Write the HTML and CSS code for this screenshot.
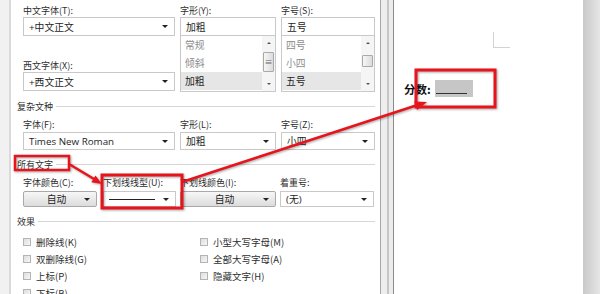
FILE: index.html
```html
<!DOCTYPE html>
<html>
<head>
    <title>字体</title>
    <link rel="stylesheet" href="styles.css">
</head>
<body>
    <div class="screen">
        <div class="edge"></div>

        <div class="dialog">
            <div class="font-grid">
                <div class="lbl">中文字体(T):</div>
                <div class="lbl">字形(Y):</div>
                <div class="lbl">字号(S):</div>

                <div class="combo"><span>+中文正文</span><i class="caret"></i></div>
                <div class="field">加粗</div>
                <div class="field">五号</div>

                <div class="stack">
                    <div class="lbl">西文字体(X):</div>
                    <div class="combo"><span>+西文正文</span><i class="caret"></i></div>
                </div>
                <div class="listbox">
                    <ul>
                        <li class="dim">常规</li>
                        <li class="dim">倾斜</li>
                        <li class="sel">加粗</li>
                    </ul>
                    <div class="scroll">
                        <i class="up"></i>
                        <div class="track"><b class="thumb long">≡</b></div>
                        <i class="down"></i>
                    </div>
                </div>
                <div class="listbox">
                    <ul>
                        <li class="dim">四号</li>
                        <li class="dim">小四</li>
                        <li class="sel">五号</li>
                    </ul>
                    <div class="scroll">
                        <i class="up"></i>
                        <div class="track"><b class="thumb short"></b></div>
                        <i class="down"></i>
                    </div>
                </div>
            </div>

            <div class="section">复杂文种</div>
            <div class="font-grid complex">
                <div class="lbl">字体(F):</div>
                <div class="lbl">字形(L):</div>
                <div class="lbl">字号(Z):</div>
                <div class="combo"><span>Times New Roman</span><i class="caret"></i></div>
                <div class="combo"><span>加粗</span><i class="caret"></i></div>
                <div class="combo"><span>小四</span><i class="caret"></i></div>
            </div>

            <div class="section">所有文字</div>
            <div class="all-grid">
                <div class="lbl">字体颜色(C):</div>
                <div class="lbl">下划线线型(U):</div>
                <div class="lbl">下划线颜色(I):</div>
                <div class="lbl">着重号:</div>
                <div class="btn small"><span>自动</span><i class="caret"></i></div>
                <div class="combo low"><span class="stroke"></span><i class="caret"></i></div>
                <div class="btn"><span>自动</span><i class="caret"></i></div>
                <div class="combo low"><span>(无)</span><i class="caret"></i></div>
            </div>

            <div class="section">效果</div>
            <div class="effects">
                <label><i class="box"></i>删除线(K)</label>
                <label><i class="box"></i>小型大写字母(M)</label>
                <label><i class="box"></i>双删除线(G)</label>
                <label><i class="box"></i>全部大写字母(A)</label>
                <label><i class="box"></i>上标(P)</label>
                <label><i class="box"></i>隐藏文字(H)</label>
                <label><i class="box"></i>下标(B)</label>
            </div>
        </div>

        <div class="divider"></div>

        <div class="page">
            <div class="corner"></div>
            <div class="score">分数: <span class="blank"><span></span></span></div>
        </div>

        <div class="shadow"></div>
    </div>

    <!-- red annotation marks on top of the screenshot -->
    <svg class="marks" width="600" height="294" viewBox="0 0 600 294">
        <g fill="none" stroke="#e8141c">
            <rect x="15" y="156" width="54" height="14" stroke-width="2.5"/>
            <rect x="102" y="175" width="80" height="33" stroke-width="3"/>
            <rect x="416" y="70" width="79" height="37" stroke-width="3"/>
            <line x1="69" y1="164" x2="94" y2="179" stroke-width="2.5"/>
            <line x1="182" y1="182" x2="416" y2="105.5" stroke-width="2.5"/>
        </g>
        <g fill="#e8141c">
            <polygon points="102,184 91.3,182.2 95.5,175.4"/>
            <polygon points="427,102 417,110 414.2,101.4"/>
        </g>
    </svg>
</body>
</html>
```

FILE: styles.css
```css
body {
    margin: 0;
    font-family: "Noto Sans CJK SC", "Noto Sans", sans-serif;
    font-size: 9px;
    color: #2e2e2e;
    position: relative;
}
.screen {
    display: flex;
    width: 600px;
    height: 294px;
    overflow: hidden;
}
.edge {
    width: 9px;
    background-color: #f1f1f1;
    border-right: 2px solid #dadada;
}
.dialog {
    width: 357px;
    padding: 4px 0 0 12px;
    background-color: #fff;
}
.lbl {
    height: 13px;
    line-height: 13px;
    white-space: nowrap;
}
.font-grid {
    display: grid;
    grid-template-columns: 152px 96px 94px;
    column-gap: 5px;
}
.combo, .field, .btn {
    box-sizing: border-box;
    height: 19px;
    border: 1px solid #c9c9c9;
    background-color: #fff;
    display: flex;
    align-items: center;
    padding: 0 6px 0 5px;
    font-family: "Open Sans", "Noto Sans CJK SC", sans-serif;
    font-size: 9.8px;
    color: #1e1e1e;
    white-space: nowrap;
}
.combo span, .btn span {
    flex: 1;
}
.caret {
    width: 0;
    height: 0;
    border-left: 3px solid transparent;
    border-right: 3px solid transparent;
    border-top: 3px solid #222;
}
.stack {
    padding-top: 23px;
}
.listbox {
    box-sizing: border-box;
    height: 56px;
    border: 1px solid #c9c9c9;
    border-top: 0;
    display: flex;
}
.listbox ul {
    flex: 1;
    list-style-type: none;
    margin: 0;
    padding: 0;
}
.listbox li {
    height: 18px;
    line-height: 18px;
    padding-left: 4px;
    font-size: 9.8px;
}
.listbox .dim {
    color: #8c8c8c;
}
.listbox .sel {
    background-color: #e6e6e6;
    color: #1e1e1e;
}
.scroll {
    width: 13px;
    background-color: #f5f5f5;
    display: flex;
    flex-direction: column;
    align-items: center;
}
.scroll .up, .scroll .down {
    width: 0;
    height: 0;
    border-left: 2px solid transparent;
    border-right: 2px solid transparent;
}
.scroll .up {
    margin-top: 6px;
    border-bottom: 2px solid #555;
}
.scroll .down {
    margin-bottom: 6px;
    border-top: 2px solid #555;
}
.track {
    flex: 1;
    width: 100%;
}
.thumb {
    display: block;
    box-sizing: border-box;
    width: 11px;
    margin: 0 auto;
    border: 1px solid #a9a9a9;
    border-radius: 1px;
    background: linear-gradient(to right, #f6f6f6, #dcdcdc);
    font-weight: normal;
    font-size: 8px;
    line-height: 18px;
    text-align: center;
    color: #666;
}
.thumb.long {
    margin-top: 8px;
    height: 20px;
}
.thumb.short {
    margin-top: 11px;
    height: 12px;
}
.section {
    display: flex;
    align-items: center;
    gap: 3px;
    height: 13px;
    line-height: 13px;
    margin: 8px 5px 0 -6px;
}
.section::after {
    content: "";
    flex: 1;
    border-top: 1px solid #d6d6d6;
}
.complex {
    margin-top: 5px;
}
.complex .combo {
    height: 18px;
    margin-top: 1px;
}
.all-grid {
    display: grid;
    grid-template-columns: 76px 73px 96px 94px;
    column-gap: 4px;
    margin-top: 5px;
}
.all-grid .combo, .all-grid .btn {
    height: 16px;
    margin-top: 2px;
}
.btn {
    border-color: #a9a9a9;
    border-radius: 2px;
    background: linear-gradient(#f7f7f7, #dcdcdc);
}
.btn span {
    text-align: center;
}
.btn.small {
    width: 74px;
}
.stroke {
    height: 1px;
    background-color: #222;
    margin-right: 8px;
}
.effects {
    display: grid;
    grid-template-columns: 177px 1fr;
    grid-auto-rows: 17px;
    margin-top: 5px;
}
.effects label {
    display: flex;
    align-items: center;
    gap: 5px;
    font-size: 9.5px;
    color: #2e2e2e;
}
.box {
    box-sizing: border-box;
    width: 8px;
    height: 8px;
    border: 1px solid #b4b4b4;
    background: linear-gradient(135deg, #dedede, #f7f7f7);
}
.divider {
    width: 12px;
    border-left: 1px solid #a2a7ae;
    border-right: 1px solid #8c8c8c;
    background: linear-gradient(to right, #eeeeee 0 6px, #c6c6c6 6px 8px, #ececec 8px);
}
.page {
    width: 189px;
    background-color: #fff;
}
.corner {
    width: 17px;
    height: 16px;
    margin: 32px 0 0 99px;
    box-sizing: border-box;
    border-left: 1px solid #d3d3d3;
    border-bottom: 1px solid #d3d3d3;
}
.score {
    display: flex;
    align-items: center;
    margin: 32px 0 0 10px;
    height: 17px;
    font-size: 11.5px;
    font-weight: bold;
    color: #111;
    gap: 4px;
}
.blank {
    display: inline-block;
    width: 38px;
    height: 17px;
    background-color: #c6c6c6;
}
.blank span {
    display: block;
    width: 31px;
    height: 13px;
    margin-left: 1px;
    border-bottom: 1px solid #333;
}
.shadow {
    flex: 1;
    background: linear-gradient(to right, #c9c9c9, #e6e6e6);
}
.marks {
    position: absolute;
    top: 0;
    left: 0;
    filter: drop-shadow(1px 1px 1px rgba(0,0,0,0.35));
}
```
